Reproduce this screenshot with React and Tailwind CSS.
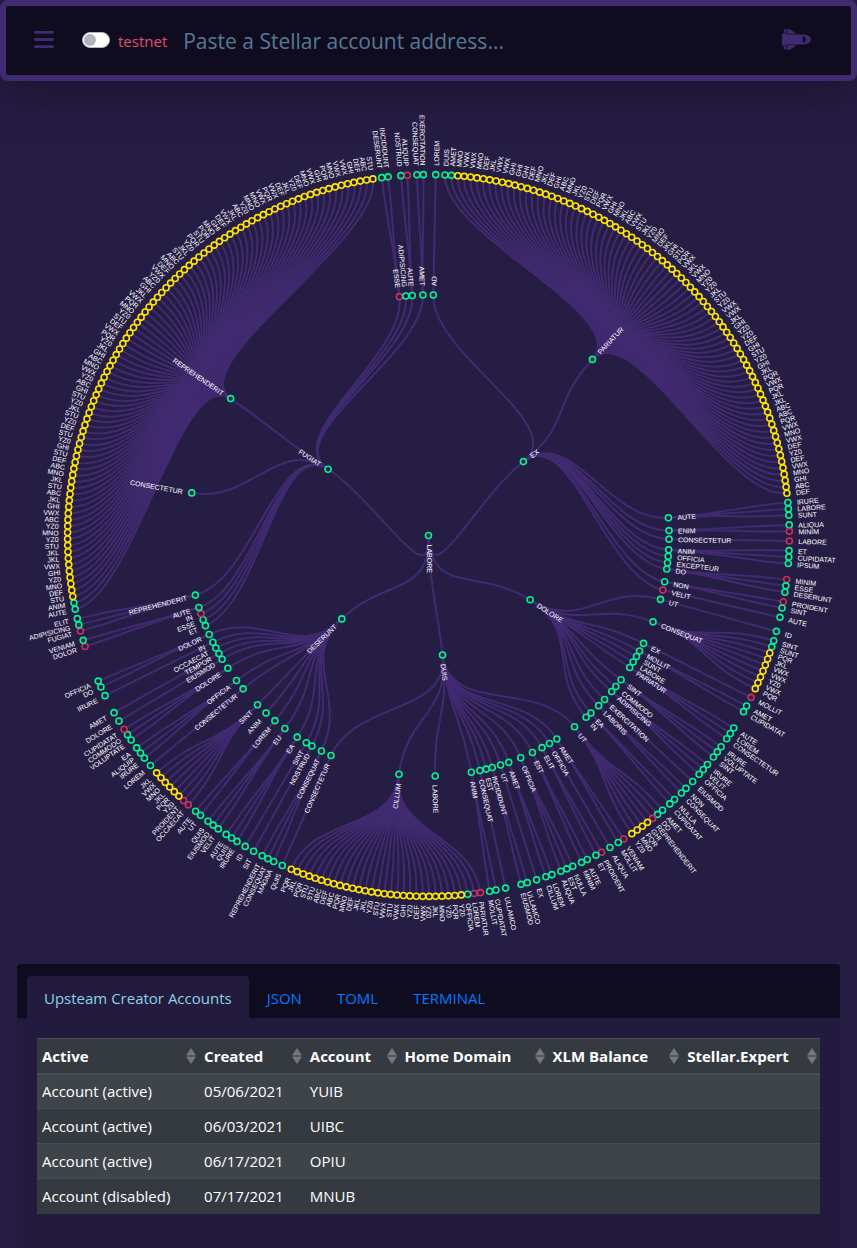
import React, { useState } from "react";
import { FaBars } from "react-icons/fa6";

/* ---------- tree data ----------
   A name ending in "!" is a flagged account (red), a three-letter code is
   a pooled account (yellow), anything else is a regular one (green).
   Angles are in degrees, clockwise from the top. */

const STEP = 1.021;
const RING = 120.3;
const CX = 428.5;
const CY = 454.5;

const codes = (text) => text.trim().split(/\s+/);

const pariatur = codes(`
  DUIS AMET MNO VWX VWX MNO DEF JKL VWX VWX GHI GHI GHI DEF MNO JKL DEF GHI ABC MNO
  JKL YZ0 STU DEF PQR VWX GHI MNO JKL ABC VWX STU JKL YZ0 MNO DEF JKL GHI STU PQR
  VWX JKL VWX MNO YZ0 YZ0 JKL STU YZ0 VWX VWX JKL GHI YZ0 YZ0 DEF GHI STU YZ0 GHI
  JKL PQR VWX PQR JKL JKL ABC ABC PQR VWX MNO VWX DEF YZ0 DEF VWX MNO GHI ABC DEF`);

const reprehenderit = codes(`
  AUTE ANIM STU DEF MNO YZ0 GHI VWX JKL JKL STU YZ0 MNO YZ0 ABC VWX GHI JKL ABC STU
  JKL MNO ABC DEF STU GHI YZ0 STU DEF YZ0 STU JKL YZ0 STU GHI ABC YZ0 VWX MNO ABC
  GHI JKL YZ0 PQR VWX DEF STU YZ0 MNO PQR VWX JKL GHI ABC YZ0 VWX DEF MNO ABC STU
  JKL YZ0 PQR STU PQR MNO GHI DEF VWX JKL ABC YZ0 MNO MNO VWX PQR VWX DEF JKL YZ0
  DEF MNO VWX GHI PQR MNO VWX VWX GHI DEF ABC STU`);

const cillum = codes(`
  PARIATUR! LOREM! OFFICIA YZ0 PQR YZ0 MNO JKL YZ0 VWX DEF YZ0 GHI VWX STU VWX STU
  YZ0 JKL JKL DEF MNO PQR ABC DEF ABC STU STU PQR JKL PQR`);

const TREE = [
  {
    name: "EX",
    angle: 52.1,
    children: [
      ["AD", 1.15, ["LOREM"]],
      ["PARIATUR", 42.95, pariatur],
      ["AUTE", 85.77, ["IRURE", "LABORE", "SUNT"]],
      ["ENIM", 88.83, ["ALIQUA", "MINIM!"]],
      ["CONSECTETUR", 90.87, ["LABORE!"]],
      ["ANIM", 93.42, ["ET", "CUPIDATAT", "IPSUM"]],
      ["OFFICIA", 94.96, []],
      ["EXCEPTEUR", 96.49, []],
      ["DO", 98.02, ["MINIM!", "ESSE", "DESERUNT"]],
      ["NON", 101.08, ["PROIDENT!", "SINT"]],
      ["VELIT!", 103.11, ["AUTE"]],
    ],
  },
  {
    name: "DOLORE",
    angle: 122.3,
    children: [
      ["UT", 105.4, ["ID"]],
      ["CONSEQUAT", 111.03, codes("SINT SUNT PQR JKL VWX VWX YZ0 VWX PQR")],
      ["EX", 116.65, ["MOLLIT!"]],
      ["MOLLIT", 118.7, ["AMET", "CUPIDATAT"]],
      ["SUNT", 120.2, []],
      ["LABORE", 121.73, []],
      ["PARIATUR", 123.26, ["AUTE", "LOREM", "CONSECTETUR"]],
      ["SINT", 126.84, ["IRURE", "VOLUPTATE", "SINT"]],
      ["COMMODO", 128.87, []],
      ["ADIPISICING", 130.41, ["IRURE", "VELIT", "OFFICIA"]],
      ["EXERCITATION", 132.96, ["EIUSMOD"]],
      ["LABORIS", 135.0, ["NON", "CONSEQUAT"]],
      ["EA", 137.54, ["NULLA", "CUPIDATAT"]],
      ["IN", 139.07, []],
    ],
  },
  {
    name: "DUIS",
    angle: 173.3,
    children: [
      ["UT", 142.64, codes("AMET DO REPREHENDERIT! GHI PQR MNO YZ0")],
      ["AMET", 147.77, ["VENIAM!", "MOLLIT"]],
      ["OFFICIA", 149.82, ["ALIQUA"]],
      ["ELIT", 151.85, ["PROIDENT!", "ET"]],
      ["EST", 154.4, ["AUTE", "MINIM"]],
      ["OFFICIA", 157.46, ["NULLA", "EST", "ALIQUA"]],
      ["AMET", 160.52, ["LOREM", "CILLUM"]],
      ["UT", 162.57, ["EX"]],
      ["INCIDIDUNT", 164.63, ["ULLAMCO", "EIUSMOD"]],
      ["EST", 166.13, []],
      ["CONSEQUAT", 167.67, ["ULLAMCO"]],
      ["ANIM", 169.74, ["CUPIDATAT", "MOLLIT"]],
      ["LABORE", 178.4, []],
      ["CILLUM", 187.04, cillum],
      ["CONSECTETUR", 203.9, ["QUIS"]],
    ],
  },
  {
    name: "DESERUNT",
    angle: 226.1,
    children: [
      ["CONSEQUAT", 206.42, ["MAGNA", "CONSEQUAT", "REPREHENDERIT"]],
      ["NOSTRUD", 208.98, ["SIT"]],
      ["SINT", 210.52, ["ID"]],
      ["EA", 213.07, ["IRURE", "QUIS", "AUTE"]],
      ["EU", 216.64, ["VELIT", "EIUSMOD", "QUIS"]],
      ["LOREM", 219.68, ["UT", "AUTE"]],
      ["ANIM", 222.47, []],
      ["SINT", 225.3, codes("OCCAECAT! PROIDENT! YZ0 PQR JKL MNO VWX JKL")],
      ["CONSECTETUR", 230.4, ["LOREM"]],
      ["OFFICIA", 232.94, ["IRURE", "ALIQUIP", "EA"]],
      ["DOLORE", 236.51, ["VOLUPTATE", "COMMODO", "CUPIDATAT!"]],
      ["EIUSMOD", 239.06, ["DOLORE"]],
      ["TEMPOR", 240.6, ["AMET"]],
      ["OCCAECAT", 242.13, []],
      ["IN", 243.66, ["IRURE"]],
      ["DOLOR", 245.7, ["DO", "OFFICIA"]],
    ],
  },
  {
    name: "FUGIAT",
    angle: 303.4,
    children: [
      ["ET", 247.99, []],
      ["ESSE", 249.52, []],
      ["IN!", 251.05, []],
      ["AUTE", 252.6, ["DOLOR!", "VENIAM"]],
      ["REPREHENDERIT", 255.66, ["FUGIAT!", "ADIPISICING", "ELIT"]],
      ["CONSECTETUR", 280.2, []],
      ["REPREHENDERIT", 304.68, reprehenderit],
      ["ESSE!", 353.06, ["DESERUNT", "INCIDIDUNT"]],
      ["ADIPISICING", 354.6, []],
      ["AUTE", 356.13, ["NOSTRUD", "ALIQUIP!"]],
      ["AMET", 358.68, ["CONSEQUAT", "EXERCITATION"]],
    ],
  },
];

const GREEN = "#00f596";
const YELLOW = "#ffe600";
const RED = "#c9315f";

const polar = (angle, radius) => {
  const t = ((angle - 90) * Math.PI) / 180;
  return [CX + radius * Math.cos(t), CY + radius * Math.sin(t)];
};

const pair = ([x, y]) => x.toFixed(2) + " " + y.toFixed(2);

const branch = (a1, r1, a2, r2) => {
  const mid = (r1 + r2) / 2;
  return `M${pair(polar(a1, r1))}C${pair(polar(a1, mid))} ${pair(polar(a2, mid))} ${pair(polar(a2, r2))}`;
};

const makeNode = (raw, angle, radius) => {
  const flagged = raw.endsWith("!");
  const name = flagged ? raw.slice(0, -1) : raw;
  const color = flagged ? RED : /^(ABC|DEF|GHI|JKL|MNO|PQR|STU|VWX|YZ0)$/.test(name) ? YELLOW : GREEN;
  return { name, angle, radius, color };
};

const buildTree = () => {
  const nodes = [];
  const links = [];
  TREE.forEach((top) => {
    nodes.push(makeNode(top.name, top.angle, RING));
    links.push(branch(177.7, 0, top.angle, RING));
    top.children.forEach(([name, angle, leaves]) => {
      nodes.push(makeNode(name, angle, RING * 2));
      links.push(branch(top.angle, RING, angle, RING * 2));
      leaves.forEach((leaf, i) => {
        const a = angle + (i - (leaves.length - 1) / 2) * STEP;
        nodes.push(makeNode(leaf, a, RING * 3));
        links.push(branch(angle, RING * 2, a, RING * 3));
      });
    });
  });
  return { nodes, links };
};

const { nodes, links } = buildTree();

function TreeNode({ node }) {
  const [x, y] = polar(node.angle, node.radius);
  const left = node.angle > 180;
  const turn = left ? node.angle + 90 : node.angle - 90;
  return (
    <g transform={`translate(${x.toFixed(2)} ${y.toFixed(2)})`}>
      <circle r="3" fill="#261d45" stroke={node.color} strokeWidth="1.6" />
      <text
        transform={`rotate(${turn.toFixed(2)})`}
        x={left ? -9 : 9}
        y="3"
        textAnchor={left ? "end" : "start"}
        fill="#ffffff"
      >
        {node.name}
      </text>
    </g>
  );
}

function AccountTree() {
  return (
    <svg
      viewBox="0 0 857 883"
      className="block w-full font-['Liberation_Sans',Arial,sans-serif] text-[7px]"
      role="img"
      aria-label="Account tree"
    >
      <g fill="none" stroke="#402a70" strokeWidth="2">
        {links.map((d, i) => (
          <path key={i} d={d} />
        ))}
      </g>
      {nodes.map((node, i) => (
        <TreeNode key={i} node={node} />
      ))}
      <g transform={`translate(${CX} ${CY})`}>
        <circle r="3" fill="#261d45" stroke={GREEN} strokeWidth="1.6" />
        <text transform="rotate(90)" x="9" y="2" fill="#ffffff">
          LABORE
        </text>
      </g>
    </svg>
  );
}

/* ---------- header ---------- */

function ShuttleIcon() {
  return (
    <svg viewBox="0 0 29 21" className="h-[21px] w-[29px]" fill="currentColor" aria-hidden="true">
      <path d="M1 4.5h4.2v12H1a1 1 0 0 1-1-1v-10a1 1 0 0 1 1-1z" />
      <path
        fillRule="evenodd"
        d="M5 5.6h16.500c4 0 7.500 2.300 7.500 4.900s-3.500 4.900-7.500 4.900H5zM21.600 7.400c1.500.6 2.300 1.700 2.300 3.100s-.8 2.500-2.300 3.100c-.5.2-.9 0-.9-.5V7.900c0-.5.4-.7.900-.5z"
      />
      <path d="M2 1.600C2.400.6 3.200 0 4.400 0v3.700H1.400z" />
      <path d="M5.400 0c1.600 0 2.700.4 3.700 1.100l5.200 3.700H5.400z" />
      <path d="M2 19.400c.4 1 1.200 1.600 2.400 1.600v-3.700H1.400z" />
      <path d="M5.400 21c1.600 0 2.700-.4 3.700-1.100l5.200-3.700H5.400z" />
    </svg>
  );
}

function Header() {
  return (
    <header className="relative flex h-[81px] items-center rounded-lg border-[6px] border-[#402a70] bg-[#0f0c1f] px-7 pb-0.5 shadow-[0_16px_48px_rgba(0,0,0,0.3)]">
      <button type="button" aria-label="Menu" className="text-[#402a70]">
        <FaBars className="h-[23px] w-5" />
      </button>
      <label className="ml-7 flex items-center gap-2 text-[15px] leading-6 text-[#e0506e]">
        <input
          type="checkbox"
          className="h-4 w-7 appearance-none rounded-full border border-[#adb5bd] bg-white p-px before:block before:size-3 before:rounded-full before:bg-[#adb5bd] checked:before:ml-3"
        />
        <span className="pt-0.5">testnet</span>
      </label>
      <input
        type="text"
        aria-label="Stellar account address"
        placeholder="Paste a Stellar account address..."
        className="ml-4 min-w-0 flex-1 bg-transparent pt-0.5 text-[21px] leading-8 text-[#8bd3e6] outline-none placeholder:text-[#557a95]"
      />
      <button type="button" aria-label="Launch" className="mr-3 text-[#402a70]">
        <ShuttleIcon />
      </button>
    </header>
  );
}

/* ---------- accounts card ---------- */

const TABS = ["Upsteam Creator Accounts", "JSON", "TOML", "TERMINAL"];

const COLUMNS = [
  ["Active", "w-[20.7%]"],
  ["Created", "w-[13.5%]"],
  ["Account", "w-[12.1%]"],
  ["Home Domain", "w-[18.9%]"],
  ["XLM Balance", "w-[17.2%]"],
  ["Stellar.Expert", ""],
];

const ROWS = [
  ["Account (active)", "05/06/2021", "YUIB"],
  ["Account (active)", "06/03/2021", "UIBC"],
  ["Account (active)", "06/17/2021", "OPIU"],
  ["Account (disabled)", "07/17/2021", "MNUB"],
];

function SortIcon() {
  return (
    <svg viewBox="0 0 10 16" className="h-4 w-[10px] shrink-0" fill="#74787d" aria-hidden="true">
      <path d="M5 0 10 7.5H0z" />
      <path d="M5 16 0 8.5h10z" />
    </svg>
  );
}

function AccountsTable() {
  return (
    <table className="w-full table-fixed border-collapse bg-[#343a40] text-left text-[15px] leading-6 text-white">
      <thead>
        <tr className="h-[35px] border-t border-b-2 border-[#454d55]">
          {COLUMNS.map(([name, width]) => (
            <th key={name} scope="col" className={`${width} p-0 pr-[3px] pl-[5px] font-bold`}>
              <button type="button" className="flex w-full items-center justify-between whitespace-nowrap">
                {name}
                <SortIcon />
              </button>
            </th>
          ))}
        </tr>
      </thead>
      <tbody>
        {ROWS.map((row) => (
          <tr key={row[1]} className="h-[35px] border-t border-[#454d55] odd:bg-[#3e444a]">
            {COLUMNS.map(([name], i) => (
              <td key={name} className="p-0 pl-[5px]">
                {row[i]}
              </td>
            ))}
          </tr>
        ))}
      </tbody>
    </table>
  );
}

function AccountsCard() {
  const [active, setActive] = useState(TABS[0]);
  return (
    <section className="mx-[17px] flex-1 rounded-t bg-[#231b3d]">
      <div role="tablist" className="flex rounded-t bg-[#0f0c1f] px-[10px] pt-3">
        {TABS.map((tab) => (
          <button
            key={tab}
            type="button"
            role="tab"
            aria-selected={tab === active}
            onClick={() => setActive(tab)}
            className={`h-[42px] rounded-t px-[17px] pt-0.5 text-[15px] leading-6 ${
              tab === active ? "mr-px bg-[#231b3d] text-[#8bd3e6]" : "mr-px text-[#007bff]"
            }`}
          >
            {tab}
          </button>
        ))}
      </div>
      <div className="p-5 pb-9">
        <AccountsTable />
      </div>
    </section>
  );
}

export default function App() {
  return (
    <div className="flex min-h-screen flex-col bg-[#261d45] font-['Open_Sans','Noto_Sans',sans-serif]">
      <Header />
      <main className="flex flex-1 flex-col">
        <AccountTree />
        <AccountsCard />
      </main>
    </div>
  );
}
